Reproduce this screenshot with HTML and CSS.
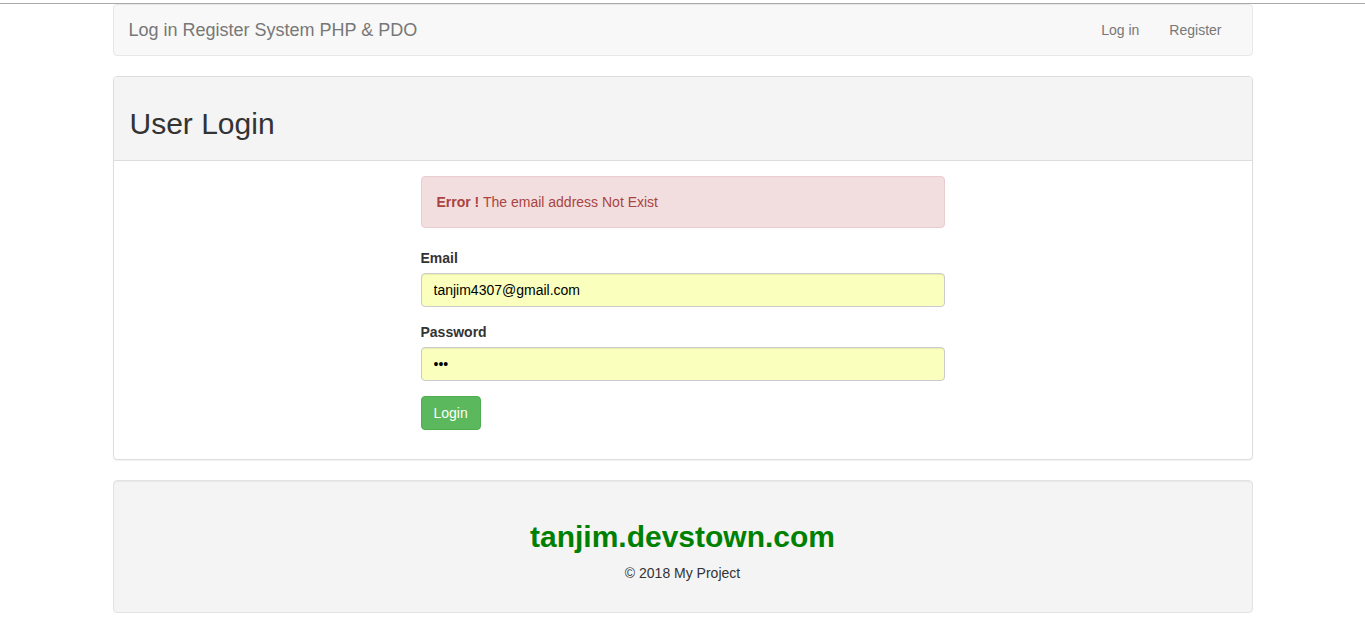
FILE: index.html
```html
<!DOCTYPE html>
<html>
<head>
<meta charset="utf-8">
<title>User Login</title>
<link rel="stylesheet" href="styles.css">
</head>
<body>
<div class="topline"></div>
<div class="container">
  <nav class="navbar">
    <a class="brand" href="#">Log in Register System PHP &amp; PDO</a>
    <ul class="nav">
      <li><a href="#">Log in</a></li>
      <li><a href="#">Register</a></li>
    </ul>
  </nav>

  <div class="panel">
    <div class="panel-heading">
      <h2>User Login</h2>
    </div>
    <div class="panel-body">
      <div class="col">
        <div class="alert"><strong>Error !</strong> The email address Not Exist</div>
        <form>
          <div class="form-group">
            <label>Email</label>
            <input class="form-control" type="text" value="tanjim4307@gmail.com">
          </div>
          <div class="form-group">
            <label>Password</label>
            <input class="form-control" type="password" value="abc">
          </div>
          <div class="form-group last">
            <button type="button" class="btn">Login</button>
          </div>
        </form>
      </div>
    </div>
  </div>

  <div class="well">
    <h2 class="site">tanjim.devstown.com</h2>
    <p>© 2018 My Project</p>
  </div>
</div>
</body>
</html>
```

FILE: styles.css
```css
* { box-sizing: border-box; }
html, body { margin: 0; padding: 0; }
body {
  font-family: "Liberation Sans", Arial, Helvetica, sans-serif;
  font-size: 14px;
  line-height: 20px;
  color: #333;
  background: #fff;
}
.topline {
  height: 4px;
  border-bottom: 1px solid #a9a9a9;
  background: #fff;
}
.container {
  width: 1170px;
  margin: 0 auto;
  padding: 0 15px;
}
.navbar {
  display: flex;
  justify-content: space-between;
  align-items: center;
  min-height: 50px;
  height: 52px;
  background: #f8f8f8;
  border: 1px solid #e7e7e7;
  border-radius: 4px;
  margin-bottom: 20px;
  padding: 0 15px;
}
.brand {
  font-size: 18px;
  line-height: 20px;
  color: #777;
  text-decoration: none;
  padding: 15px 0;
}
.nav {
  list-style: none;
  margin: 0;
  padding: 0;
  display: flex;
}
.nav a {
  display: block;
  padding: 15px;
  color: #777;
  text-decoration: none;
  line-height: 20px;
}
.panel {
  border: 1px solid #ddd;
  border-radius: 4px;
  box-shadow: 0 1px 1px rgba(0,0,0,.05);
  margin-bottom: 20px;
  background: #fff;
}
.panel-heading {
  background: #f4f4f4;
  border-bottom: 1px solid #ddd;
  padding: 10px 15px 10px 16px;
  border-radius: 3px 3px 0 0;
}
h2 {
  font-size: 30px;
  font-weight: 500;
  line-height: 33px;
  margin: 20px 0 10px;
  color: #333;
}
.panel-body {
  padding: 15px;
}
.col {
  margin-left: 25%;
  width: 50%;
  padding: 0 15px;
}
.alert {
  background: #f2dede;
  border: 1px solid #ebccd1;
  color: #a94442;
  border-radius: 4px;
  padding: 15px;
  margin-bottom: 20px;
}
.form-group { margin-bottom: 15px; }
.form-group.last { margin-bottom: 14px; }
label {
  display: block;
  font-weight: bold;
  margin-bottom: 5px;
}
.form-control {
  display: block;
  width: 100%;
  height: 34px;
  padding: 6px 12px;
  font-family: inherit;
  font-size: 14px;
  line-height: 20px;
  color: #000;
  background: #faffbd;
  border: 1px solid #ccc;
  border-radius: 4px;
  box-shadow: inset 0 1px 1px rgba(0,0,0,.075);
}
.btn {
  display: inline-block;
  height: 34px;
  padding: 6px 12px;
  font-family: inherit;
  font-size: 14px;
  line-height: 20px;
  color: #fff;
  background: #5cb85c;
  border: 1px solid #4cae4c;
  border-radius: 4px;
}
.well {
  background: #f4f4f4;
  border: 1px solid #e3e3e3;
  border-radius: 4px;
  box-shadow: inset 0 1px 1px rgba(0,0,0,.05);
  padding: 19px;
  margin-bottom: 20px;
  text-align: center;
}
.site {
  color: green;
  font-weight: bold;
}
.well p { margin: 0 0 10px; }
```
